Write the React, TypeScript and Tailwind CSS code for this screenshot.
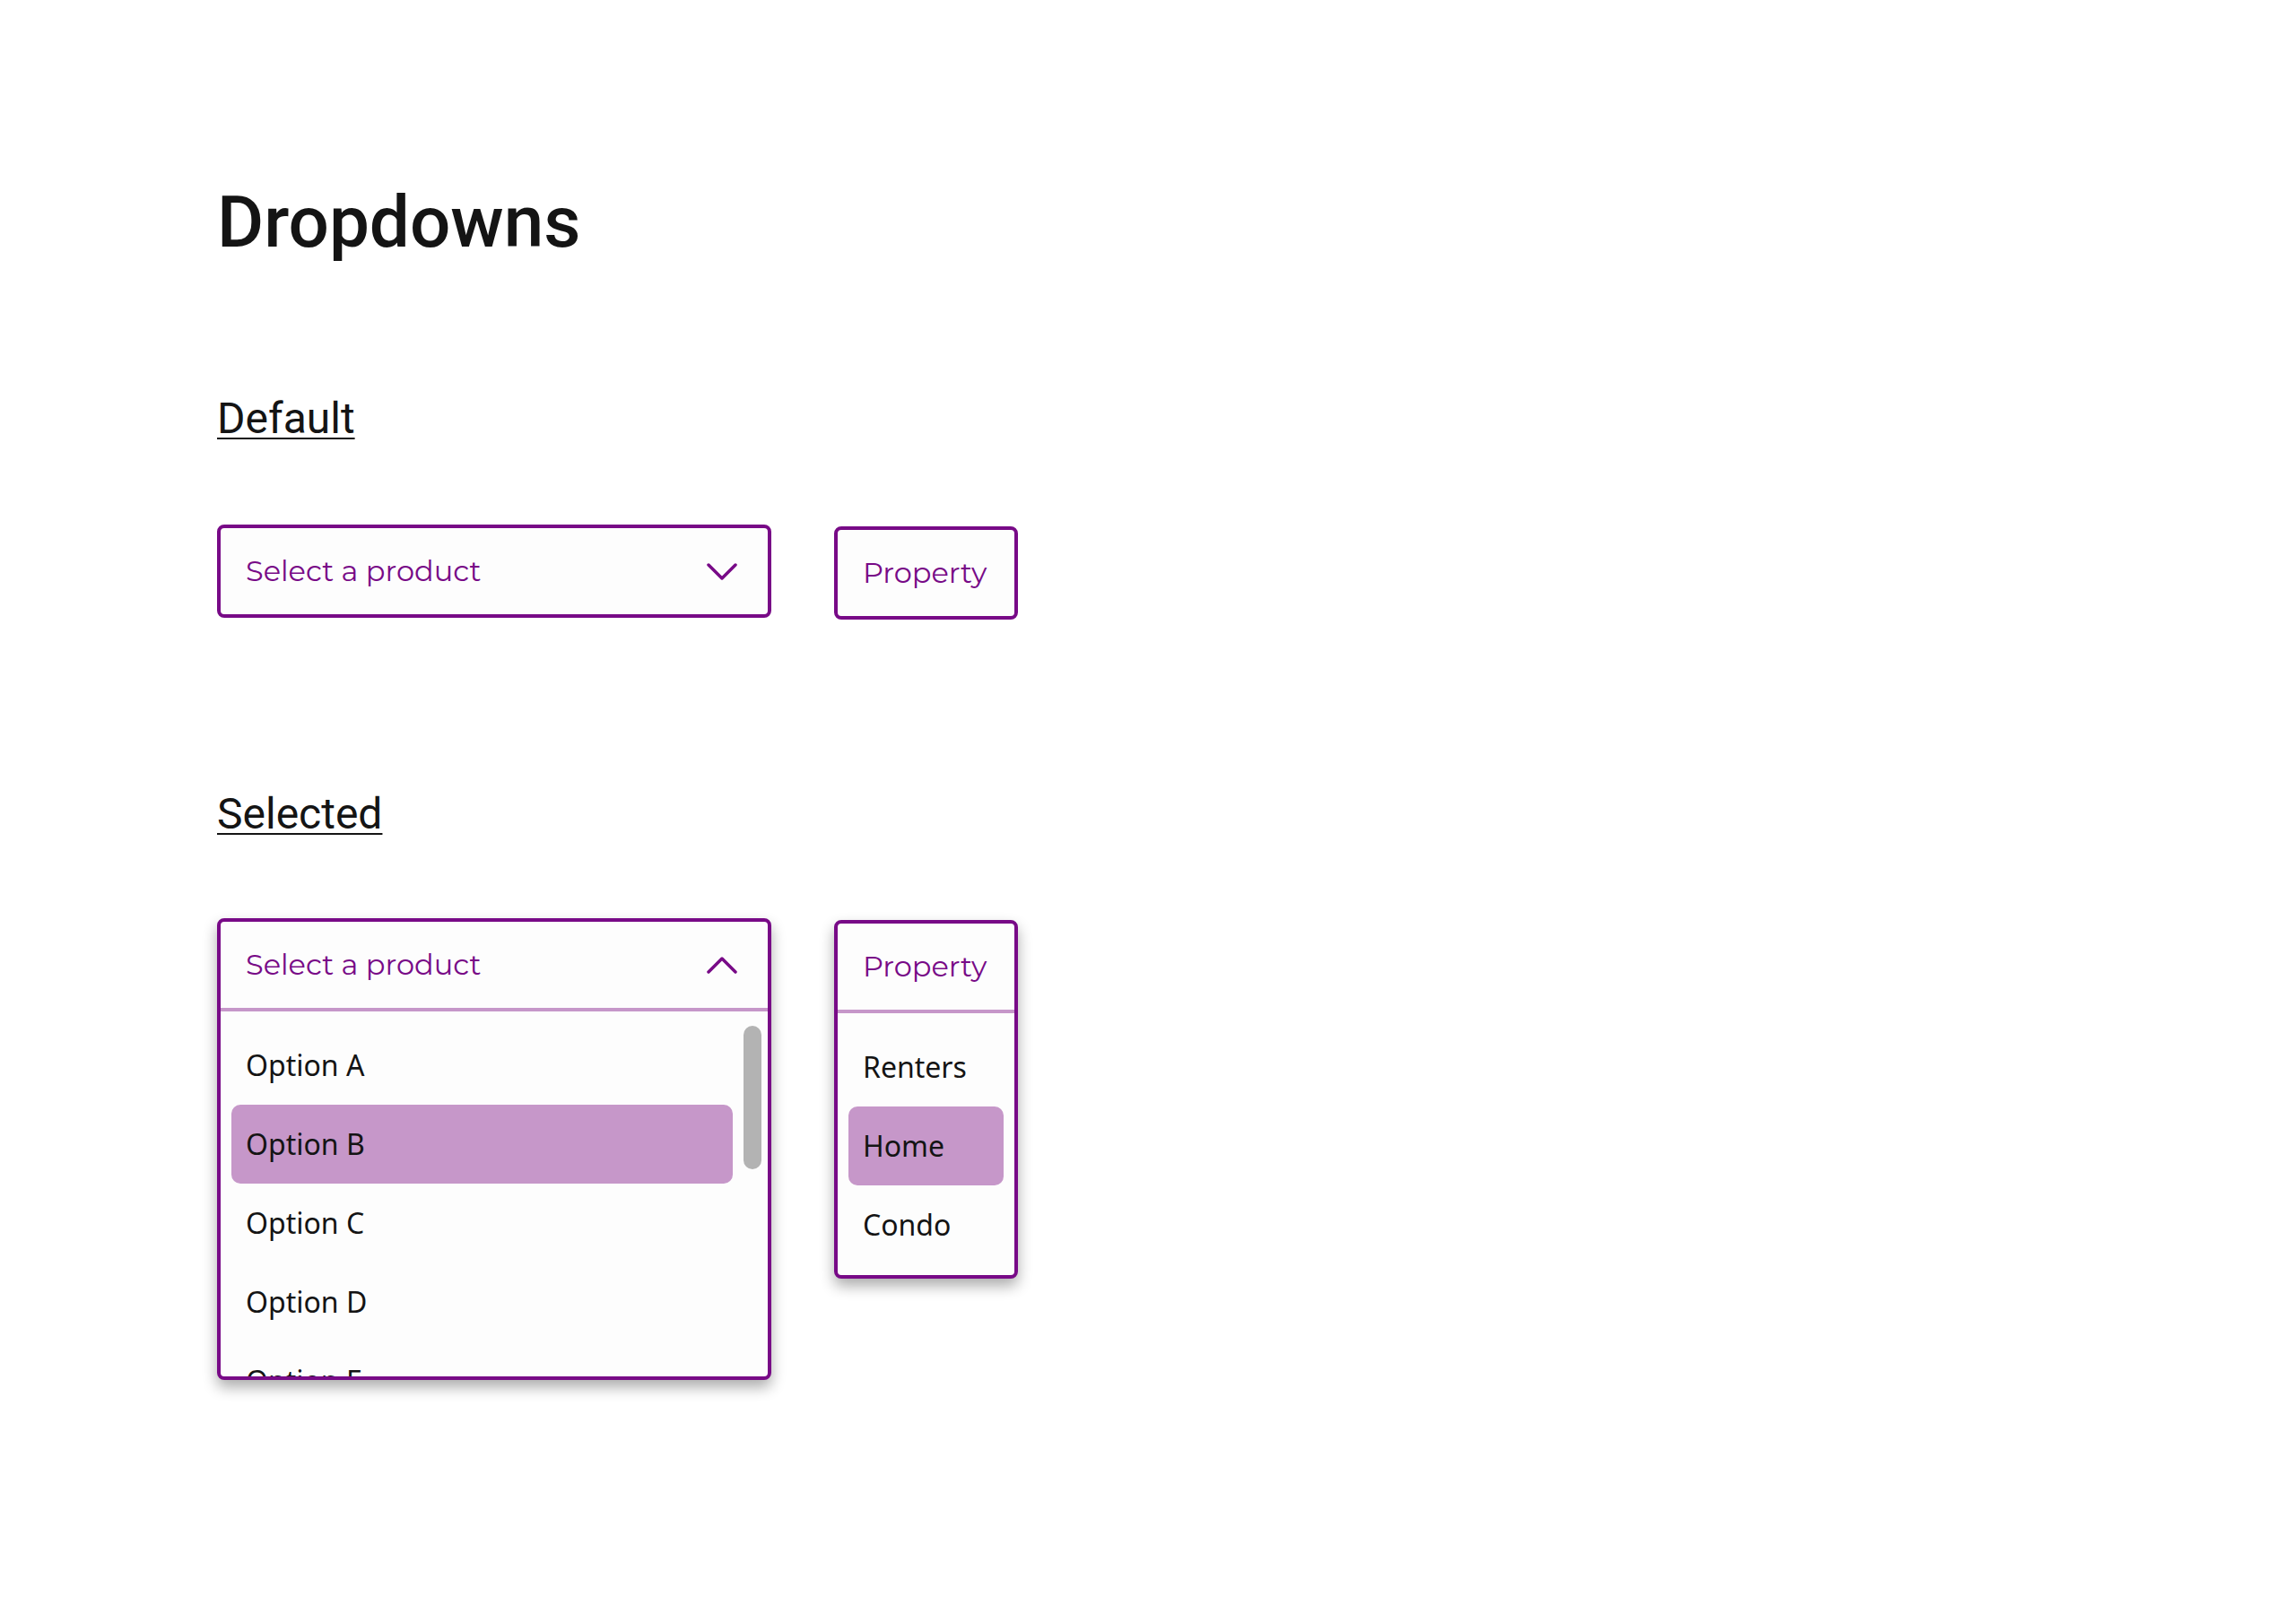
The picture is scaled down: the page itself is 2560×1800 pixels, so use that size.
import React from 'react'

const purple = 'text-[#780a87]'

function Chevron({ up = false }: { up?: boolean }) {
  return (
    <svg width="34" height="19" viewBox="0 0 34 19" fill="none" className="shrink-0">
      <polyline
        points={up ? '2,17 17,2 32,17' : '2,2 17,17 32,2'}
        stroke="#780a87"
        strokeWidth="3.5"
        strokeLinecap="round"
        strokeLinejoin="round"
      />
    </svg>
  )
}

function SectionTitle({ children }: { children: React.ReactNode }) {
  return (
    <h2 className="font-['Roboto',sans-serif] text-[48px] leading-[56px] text-[#141414] underline decoration-2 underline-offset-[5px]">
      {children}
    </h2>
  )
}

function Item({ label, active = false }: { label: string; active?: boolean }) {
  return (
    <div
      className={
        'flex h-[88px] shrink-0 items-center rounded-[10px] px-4 font-[\'Inter\',sans-serif] text-[32px] text-[#141414] ' +
        (active ? 'bg-[#c697c9]' : '')
      }
    >
      {label}
    </div>
  )
}

export default function App() {
  const options = ['Option A', 'Option B', 'Option C', 'Option D', 'Option E', 'Option F']

  return (
    <div className="min-h-screen bg-white pl-[242px] pt-[200px]">
      <h1 className="font-['Roboto',sans-serif] text-[80px] font-medium leading-[96px] text-[#141414]">
        Dropdowns
      </h1>

      {/* default state */}
      <section className="mt-[143px]">
        <SectionTitle>Default</SectionTitle>
        <div className="mt-[90px] flex items-start gap-[70px]">
          <div className="flex h-[104px] w-[618px] items-center justify-between rounded-[8px] border-4 border-[#780a87] bg-[#fdfdfd] pl-7 pr-[34px]">
            <span className={"font-['Montserrat','DejaVu_Sans',sans-serif] text-[32px] " + purple}>
              Select a product
            </span>
            <Chevron />
          </div>
          <div className="mt-[2px] flex h-[104px] w-[205px] items-center rounded-[8px] border-4 border-[#780a87] bg-[#fdfdfd] pl-7">
            <span className={"font-['Montserrat','DejaVu_Sans',sans-serif] text-[32px] " + purple}>
              Property
            </span>
          </div>
        </div>
      </section>

      {/* open state */}
      <section className="mt-[189px]">
        <SectionTitle>Selected</SectionTitle>
        <div className="mt-[88px] flex items-start gap-[70px]">
          <div className="w-[618px] overflow-hidden rounded-[8px] border-4 border-[#780a87] bg-[#fdfdfd] shadow-[0_8px_16px_rgba(0,0,0,0.33)]">
            <div className="flex h-[96px] items-center justify-between pl-7 pr-[34px]">
              <span className={"font-['Montserrat','DejaVu_Sans',sans-serif] text-[32px] " + purple}>
                Select a product
              </span>
              <Chevron up />
            </div>
            <div className="h-[4px] bg-[#c697c9]" />
            <div className="flex h-[407px] overflow-hidden pl-3 pt-4">
              <div className="flex flex-1 flex-col">
                {options.map((o) => (
                  <Item key={o} label={o} active={o === 'Option B'} />
                ))}
              </div>
              <div className="ml-3 mr-[7px] w-[20px]">
                <div className="h-[160px] rounded-full bg-[#b3b3b3]" />
              </div>
            </div>
          </div>

          <div className="mt-[2px] w-[205px] overflow-hidden rounded-[8px] border-4 border-[#780a87] bg-[#fdfdfd] shadow-[0_8px_16px_rgba(0,0,0,0.33)]">
            <div className="flex h-[96px] items-center pl-7">
              <span className={"font-['Montserrat','DejaVu_Sans',sans-serif] text-[32px] " + purple}>
                Property
              </span>
            </div>
            <div className="h-[4px] bg-[#c697c9]" />
            <div className="flex flex-col px-3 pb-3 pt-4">
              <Item label="Renters" />
              <Item label="Home" active />
              <Item label="Condo" />
            </div>
          </div>
        </div>
      </section>
    </div>
  )
}
